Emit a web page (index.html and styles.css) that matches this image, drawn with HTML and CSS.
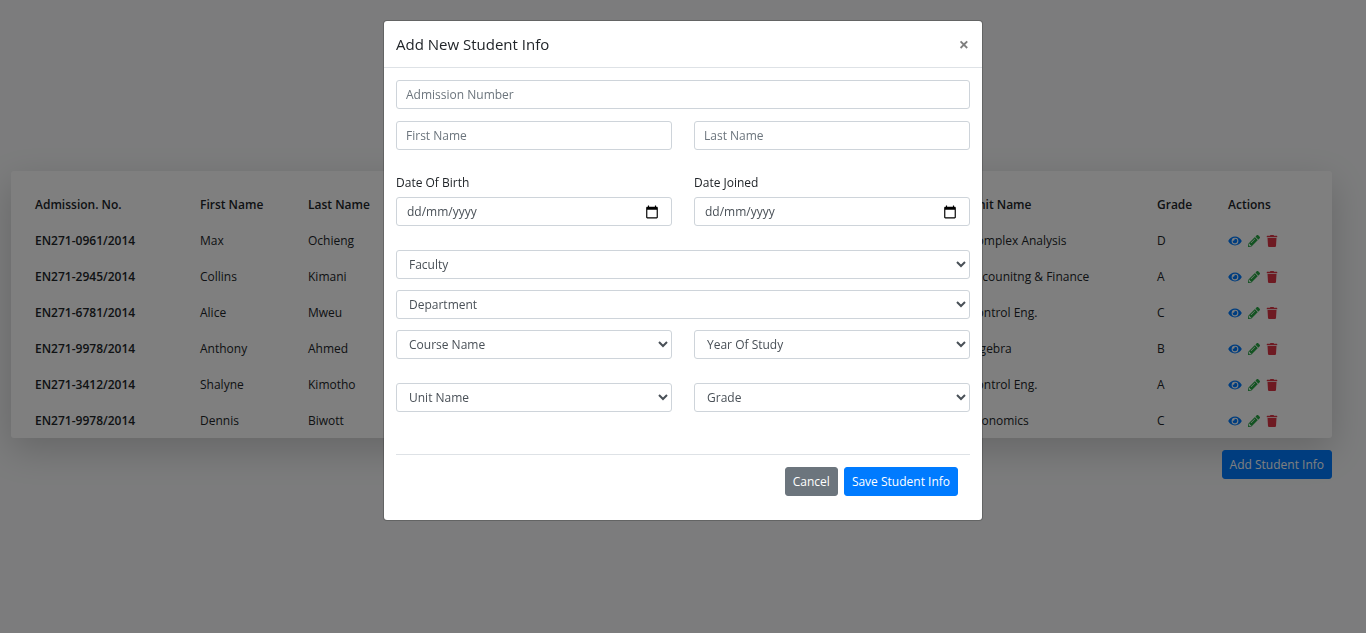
FILE: index.html
```
<!DOCTYPE html>
<html lang="en">
<head>
<meta charset="utf-8">
<meta name="viewport" content="width=device-width, initial-scale=1">
<title>Student Info</title>
<link rel="stylesheet" href="styles.css">
</head>
<body>
<svg class="sprite" aria-hidden="true">
  <symbol id="eye" viewBox="0 0 576 512"><path d="M572.52 241.4C518.29 135.59 410.93 64 288 64S57.68 135.64 3.48 241.41a32.35 32.35 0 0 0 0 29.19C57.71 376.41 165.07 448 288 448s230.32-71.64 284.52-177.41a32.35 32.35 0 0 0 0-29.19zM288 400a144 144 0 1 1 144-144 143.93 143.93 0 0 1-144 144zm0-240a95.31 95.31 0 0 0-25.31 3.79 47.85 47.85 0 0 1-66.9 66.9A95.78 95.78 0 1 0 288 160z"/></symbol>
  <symbol id="pencil" viewBox="0 0 512 512"><path d="M497.9 142.1l-46.1 46.1c-4.7 4.7-12.3 4.7-17 0l-111-111c-4.7-4.7-4.7-12.3 0-17l46.1-46.1c18.7-18.7 49.1-18.7 67.9 0l60.1 60.1c18.8 18.7 18.8 49.1 0 67.9zM284.2 99.8L21.6 362.4.4 483.9c-2.9 16.4 11.4 30.6 27.8 27.8l121.5-21.3 262.6-262.6c4.7-4.7 4.7-12.3 0-17l-111-111c-4.8-4.7-12.4-4.7-17.1 0zM124.1 339.9c-5.5-5.5-5.5-14.3 0-19.8l154-154c5.5-5.5 14.3-5.5 19.8 0s5.5 14.3 0 19.8l-154 154c-5.5 5.5-14.3 5.5-19.8 0zM88 424h48v36.3l-64.5 11.3-31.1-31.1L51.7 376H88v48z"/></symbol>
  <symbol id="trash" viewBox="0 0 448 512"><path d="M432 32H312l-9.4-18.7A24 24 0 0 0 281.1 0H166.8a23.72 23.72 0 0 0-21.4 13.3L136 32H16A16 16 0 0 0 0 48v32a16 16 0 0 0 16 16h416a16 16 0 0 0 16-16V48a16 16 0 0 0-16-16zM53.2 467a48 48 0 0 0 47.9 45h245.8a48 48 0 0 0 47.9-45L416 128H32z"/></symbol>
  <symbol id="calendar" viewBox="0 0 24 24"><path d="M20 3h-1V1h-2v2H7V1H5v2H4c-1.1 0-2 .9-2 2v16c0 1.100.9 2 2 2h16c1.100 0 2-.9 2-2V5c0-1.100-.9-2-2-2zm0 18H4V8h16v13z"/></symbol>
</svg>

<main class="page">
  <section class="card">
    <table class="students">
      <colgroup><col class="c-adm"><col class="c-first"><col class="c-last"><col><col class="c-unit"><col class="c-grade"><col class="c-actions"></colgroup>
      <thead>
        <tr><th scope="col">Admission. No.</th><th scope="col">First Name</th><th scope="col">Last Name</th><td></td><th scope="col">Unit Name</th><th scope="col">Grade</th><th scope="col">Actions</th></tr>
      </thead>
      <tbody>
        <tr><th scope="row">EN271-0961/2014</th><td>Max</td><td>Ochieng</td><td></td><td>Complex Analysis</td><td>D</td><td><div class="actions"><button class="icon view"><svg><use href="#eye"/></svg></button><button class="icon edit"><svg><use href="#pencil"/></svg></button><button class="icon delete"><svg><use href="#trash"/></svg></button></div></td></tr>
        <tr><th scope="row">EN271-2945/2014</th><td>Collins</td><td>Kimani</td><td></td><td>Accounitng &amp; Finance</td><td>A</td><td><div class="actions"><button class="icon view"><svg><use href="#eye"/></svg></button><button class="icon edit"><svg><use href="#pencil"/></svg></button><button class="icon delete"><svg><use href="#trash"/></svg></button></div></td></tr>
        <tr><th scope="row">EN271-6781/2014</th><td>Alice</td><td>Mweu</td><td></td><td>Control Eng.</td><td>C</td><td><div class="actions"><button class="icon view"><svg><use href="#eye"/></svg></button><button class="icon edit"><svg><use href="#pencil"/></svg></button><button class="icon delete"><svg><use href="#trash"/></svg></button></div></td></tr>
        <tr><th scope="row">EN271-9978/2014</th><td>Anthony</td><td>Ahmed</td><td></td><td>Algebra</td><td>B</td><td><div class="actions"><button class="icon view"><svg><use href="#eye"/></svg></button><button class="icon edit"><svg><use href="#pencil"/></svg></button><button class="icon delete"><svg><use href="#trash"/></svg></button></div></td></tr>
        <tr><th scope="row">EN271-3412/2014</th><td>Shalyne</td><td>Kimotho</td><td></td><td>Control Eng.</td><td>A</td><td><div class="actions"><button class="icon view"><svg><use href="#eye"/></svg></button><button class="icon edit"><svg><use href="#pencil"/></svg></button><button class="icon delete"><svg><use href="#trash"/></svg></button></div></td></tr>
        <tr><th scope="row">EN271-9978/2014</th><td>Dennis</td><td>Biwott</td><td></td><td>Economics</td><td>C</td><td><div class="actions"><button class="icon view"><svg><use href="#eye"/></svg></button><button class="icon edit"><svg><use href="#pencil"/></svg></button><button class="icon delete"><svg><use href="#trash"/></svg></button></div></td></tr>
      </tbody>
    </table>
  </section>
  <button class="btn primary add">Add Student Info</button>
</main>

<div class="backdrop">
  <div class="modal" role="dialog" aria-labelledby="modal-title">
    <header class="modal-header">
      <h5 class="modal-title" id="modal-title">Add New Student Info</h5>
      <button class="close">×</button>
    </header>
    <form class="modal-body">
      <div class="stack">
        <input class="control" type="text" placeholder="Admission Number">
        <div class="pair">
          <input class="control" type="text" placeholder="First Name">
          <input class="control" type="text" placeholder="Last Name">
        </div>
      </div>
      <div class="pair">
        <div class="field">
          <label for="birth">Date Of Birth</label>
          <div class="control date"><input id="birth" type="text" placeholder="dd/mm/yyyy"><svg><use href="#calendar"/></svg></div>
        </div>
        <div class="field">
          <label for="joined">Date Joined</label>
          <div class="control date"><input id="joined" type="text" placeholder="dd/mm/yyyy"><svg><use href="#calendar"/></svg></div>
        </div>
      </div>
      <div class="stack tight">
        <select class="control"><option>Faculty</option></select>
        <select class="control"><option>Department</option></select>
        <div class="pair">
          <select class="control"><option>Course Name</option></select>
          <select class="control"><option>Year Of Study</option></select>
        </div>
      </div>
      <div class="pair">
        <select class="control"><option>Unit Name</option></select>
        <select class="control"><option>Grade</option></select>
      </div>
      <footer class="modal-footer">
        <button type="button" class="btn secondary">Cancel</button>
        <button type="button" class="btn primary">Save Student Info</button>
      </footer>
    </form>
  </div>
</div>
</body>
</html>
```
FILE: styles.css
```
* { box-sizing: border-box; }
body {
  margin: 0;
  min-height: 100vh;
  background: #f8f9fa;
  color: #212529;
  font: 12px/18px "Segoe UI", "Open Sans", "Noto Sans", sans-serif;
}
button, input, select { font: inherit; }
button { cursor: pointer; }
.sprite { display: none; }

.page {
  display: flex;
  flex-direction: column;
  gap: 12px;
  padding: 171px 34px 24px 11px;
}
.card {
  padding: 15px 0 0 24px;
  border-radius: 3px;
  background: #fff;
  box-shadow: 0 12px 36px rgba(0, 0, 0, .175);
}
.students {
  width: 100%;
  table-layout: fixed;
  border-collapse: collapse;
}
.students th, .students td {
  height: 36px;
  padding: 2px 0 0;
  text-align: left;
  white-space: nowrap;
}
.students th { font-weight: 600; }
.c-adm { width: 165px; }
.c-first { width: 108px; }
.c-last { width: 100px; }
.c-unit { width: 188px; }
.c-grade { width: 71px; }
.c-actions { width: 104px; }
.actions { display: flex; align-items: center; gap: 6px; }
.icon { display: flex; padding: 0; border: 0; background: none; }
.icon svg { width: 12px; height: 12px; fill: currentColor; }
.view { color: #007bff; }
.view svg { width: 14px; }
.edit { color: #28a745; }
.delete { color: #dc3545; }

.btn {
  height: 29px;
  padding: 0 7px;
  border: 1px solid transparent;
  border-radius: 3px;
  color: #fff;
}
.primary { border-color: #007bff; background: #007bff; }
.secondary { border-color: #6c757d; background: #6c757d; }
.add { align-self: flex-end; }

.backdrop {
  position: fixed;
  inset: 0;
  overflow: auto;
  background: rgba(0, 0, 0, .5);
}
.modal {
  max-width: 600px;
  margin: 20px auto;
  border: 1px solid rgba(0, 0, 0, .2);
  border-radius: 4px;
  background: #fff;
  background-clip: padding-box;
}
.modal-header {
  display: flex;
  align-items: center;
  justify-content: space-between;
  padding: 12px;
  border-bottom: 1px solid #dee2e6;
}
.modal-title { margin: 0; font-size: 15px; line-height: 22px; font-weight: 500; }
.close {
  padding: 0 1px;
  border: 0;
  background: none;
  color: #000;
  opacity: .5;
  font-size: 18px;
  font-weight: 700;
  line-height: 22px;
}
.modal-body {
  display: flex;
  flex-direction: column;
  gap: 24px;
  padding: 12px;
}
.stack { display: flex; flex-direction: column; gap: 12px; }
.stack.tight { gap: 11px; }
.pair { display: grid; grid-template-columns: 1fr 1fr; gap: 22px; }
.field { display: flex; flex-direction: column; gap: 5px; }
.control {
  width: 100%;
  height: 29px;
  padding: 0 9px;
  border: 1px solid #ced4da;
  border-radius: 3px;
  background: #fff;
  color: #495057;
}
select.control { padding: 0 9px 0 8px; }
input::placeholder { color: #6c757d; opacity: 1; }
.date { display: flex; align-items: center; padding: 0 12px 0 10px; }
.date input {
  flex: 1;
  min-width: 0;
  padding: 0;
  border: 0;
  outline: 0;
  background: none;
}
.date input::placeholder { color: #495057; }
.date svg { width: 14px; height: 14px; fill: #000; }
.modal-footer {
  display: flex;
  justify-content: flex-end;
  gap: 6px;
  margin-top: 18px;
  padding: 12px;
  border-top: 1px solid #dee2e6;
}
```
